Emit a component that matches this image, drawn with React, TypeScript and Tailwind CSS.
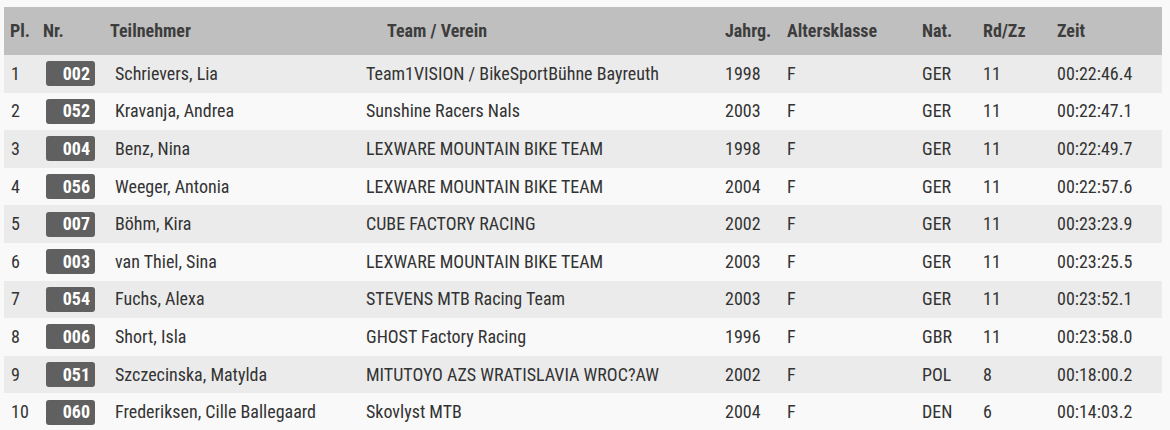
import React from 'react';

interface Result {
  place: number;
  bib: string;
  name: string;
  team: string;
  year: string;
  cls: string;
  nat: string;
  laps: string;
  time: string;
}

const results: Result[] = [
  { place: 1, bib: '002', name: 'Schrievers, Lia', team: 'Team1VISION / BikeSportBühne Bayreuth', year: '1998', cls: 'F', nat: 'GER', laps: '11', time: '00:22:46.4' },
  { place: 2, bib: '052', name: 'Kravanja, Andrea', team: 'Sunshine Racers Nals', year: '2003', cls: 'F', nat: 'GER', laps: '11', time: '00:22:47.1' },
  { place: 3, bib: '004', name: 'Benz, Nina', team: 'LEXWARE MOUNTAIN BIKE TEAM', year: '1998', cls: 'F', nat: 'GER', laps: '11', time: '00:22:49.7' },
  { place: 4, bib: '056', name: 'Weeger, Antonia', team: 'LEXWARE MOUNTAIN BIKE TEAM', year: '2004', cls: 'F', nat: 'GER', laps: '11', time: '00:22:57.6' },
  { place: 5, bib: '007', name: 'Böhm, Kira', team: 'CUBE FACTORY RACING', year: '2002', cls: 'F', nat: 'GER', laps: '11', time: '00:23:23.9' },
  { place: 6, bib: '003', name: 'van Thiel, Sina', team: 'LEXWARE MOUNTAIN BIKE TEAM', year: '2003', cls: 'F', nat: 'GER', laps: '11', time: '00:23:25.5' },
  { place: 7, bib: '054', name: 'Fuchs, Alexa', team: 'STEVENS MTB Racing Team', year: '2003', cls: 'F', nat: 'GER', laps: '11', time: '00:23:52.1' },
  { place: 8, bib: '006', name: 'Short, Isla', team: 'GHOST Factory Racing', year: '1996', cls: 'F', nat: 'GBR', laps: '11', time: '00:23:58.0' },
  { place: 9, bib: '051', name: 'Szczecinska, Matylda', team: 'MITUTOYO AZS WRATISLAVIA WROC?AW', year: '2002', cls: 'F', nat: 'POL', laps: '8', time: '00:18:00.2' },
  { place: 10, bib: '060', name: 'Frederiksen, Cille Ballegaard', team: 'Skovlyst MTB', year: '2004', cls: 'F', nat: 'DEN', laps: '6', time: '00:14:03.2' },
];

const font = "font-['Roboto','Liberation_Sans',sans-serif] font-stretch-condensed";

const App: React.FC = () => {
  return (
    <div className={`min-h-[430px] bg-[#f9f9f9] pt-[7px] px-[4px] text-[18px] leading-none ${font}`}>
      <div className="w-[1158px]">
        {/* header */}
        <div className="flex items-center h-[48px] bg-[#bfbfbf] font-bold text-[#3d3d3d]">
          <div className="w-[38px] pl-[6px]">Pl.</div>
          <div className="w-[68px] pl-[1px]">Nr.</div>
          <div className="w-[250px]">Teilnehmer</div>
          <div className="w-[360px] pl-[27px]">Team / Verein</div>
          <div className="w-[62px] pl-[5px]">Jahrg.</div>
          <div className="w-[135px] pl-[5px]">Altersklasse</div>
          <div className="w-[61px] pl-[5px]">Nat.</div>
          <div className="w-[74px] pl-[5px]">Rd/Zz</div>
          <div className="flex-1 pl-[5px]">Zeit</div>
        </div>

        {results.map((r, i) => (
          <div
            key={r.place}
            className={`flex items-center h-[37.6px] text-[#333333] ${i % 2 === 0 ? 'bg-[#ebebeb]' : 'bg-[#f9f9f9]'}`}
          >
            <div className="w-[38px] pl-[7px]">{r.place}</div>
            <div className="w-[68px] pl-[4px]">
              <span className="flex items-center justify-end w-[49px] h-[25px] pr-[5px] rounded-[3px] bg-[#606060] text-white font-bold">
                {r.bib}
              </span>
            </div>
            <div className="w-[250px] pl-[5px] whitespace-nowrap">{r.name}</div>
            <div className="w-[360px] pl-[6px] whitespace-nowrap">{r.team}</div>
            <div className="w-[62px] pl-[5px]">{r.year}</div>
            <div className="w-[135px] pl-[5px]">{r.cls}</div>
            <div className="w-[61px] pl-[5px]">{r.nat}</div>
            <div className="w-[74px] pl-[5px]">{r.laps}</div>
            <div className="flex-1 pl-[5px]">{r.time}</div>
          </div>
        ))}
      </div>
    </div>
  );
};

export default App;
